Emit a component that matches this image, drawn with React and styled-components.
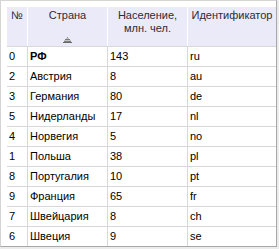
import React from 'react';
import styled, { createGlobalStyle } from 'styled-components';

const GlobalStyle = createGlobalStyle`
  html, body {
    margin: 0;
    padding: 0;
    background: #ececec;
  }
  body {
    font-family: "Liberation Sans", Arial, sans-serif;
    font-size: 11px;
  }
`;

const Frame = styled.div`
  box-sizing: border-box;
  width: 277px;
  height: 247px;
  padding: 6px 0 0 6px;
  background: #ffffff;
  border-left: 1px solid #d4d4d4;
  border-top: 1px solid #d4d4d4;
  border-right: 1px solid #a8a8a8;
  border-bottom: 1px solid #a8a8a8;
  overflow: hidden;
`;

const Grid = styled.div`
  display: grid;
  grid-template-columns: 20px 79px 79px 88px;
  column-gap: 1px;
  row-gap: 1px;
  grid-auto-rows: 19px;
  grid-template-rows: 39px;
  background: #d8d8d8;
  width: 269px;
`;

const HeaderCell = styled.div`
  background: #eaeaf8;
  color: #2e2a3a;
  text-align: center;
  padding-top: 2px;
  line-height: 13px;
  box-shadow: 1px 0 0 #ffffff;
  display: flex;
  flex-direction: column;
  align-items: center;
`;

const SortArrow = styled.svg`
  margin-top: 15px;
  display: block;
`;

const Cell = styled.div`
  background: #ffffff;
  color: #000000;
  padding-left: 2px;
  line-height: 19px;
  white-space: nowrap;
  overflow: hidden;
  font-weight: ${(p) => (p.$bold ? 'bold' : 'normal')};
`;

const rows = [
  ['0', 'РФ', '143', 'ru', true],
  ['2', 'Австрия', '8', 'au'],
  ['3', 'Германия', '80', 'de'],
  ['5', 'Нидерланды', '17', 'nl'],
  ['4', 'Норвегия', '5', 'no'],
  ['1', 'Польша', '38', 'pl'],
  ['8', 'Португалия', '10', 'pt'],
  ['9', 'Франция', '65', 'fr'],
  ['7', 'Швейцария', '8', 'ch'],
  ['6', 'Швеция', '9', 'se'],
];

export default function App() {
  return (
    <>
      <GlobalStyle />
      <Frame>
        <Grid>
          <HeaderCell>№</HeaderCell>
          <HeaderCell>
            <span>Страна</span>
            <SortArrow width="9" height="6" viewBox="0 0 9 6" shapeRendering="crispEdges">
              <rect x="4" y="0" width="1" height="1" fill="#8a8a8a" />
              <rect x="3" y="1" width="3" height="1" fill="#c4c4c4" />
              <rect x="2" y="2" width="5" height="1" fill="#7c7c7c" />
              <rect x="1" y="3" width="7" height="1" fill="#c4c4c4" />
              <rect x="1" y="4" width="7" height="1" fill="#7c7c7c" />
              <rect x="0" y="5" width="9" height="1" fill="#6a6a6a" />
            </SortArrow>
          </HeaderCell>
          <HeaderCell>
            <span>Население,</span>
            <span>млн. чел.</span>
          </HeaderCell>
          <HeaderCell>Идентификатор</HeaderCell>
          {rows.map(([n, name, pop, id, bold]) => (
            <React.Fragment key={id}>
              <Cell>{n}</Cell>
              <Cell $bold={bold}>{name}</Cell>
              <Cell>{pop}</Cell>
              <Cell>{id}</Cell>
            </React.Fragment>
          ))}
        </Grid>
      </Frame>
    </>
  );
}
